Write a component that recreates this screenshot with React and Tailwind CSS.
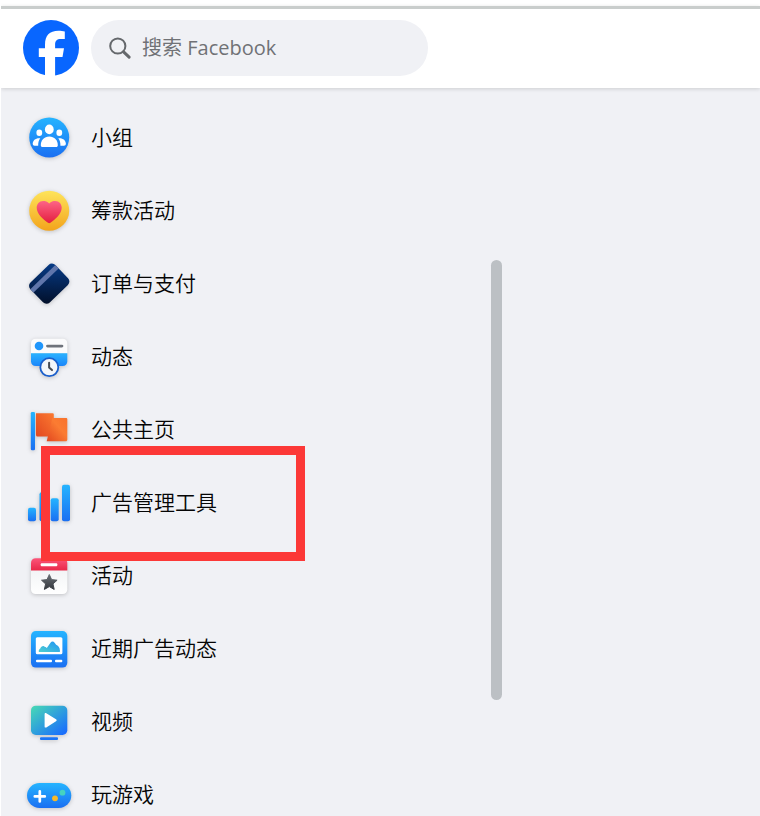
import React from "react";

function Icon({ children }) {
  return (
    <svg
      viewBox="0 0 45 45"
      className="h-[45px] w-[45px] shrink-0 overflow-visible drop-shadow-[0_1px_2px_rgba(0,0,0,0.2)]"
      aria-hidden="true"
    >
      {children}
    </svg>
  );
}

function Gradients() {
  return (
    <svg className="absolute h-0 w-0" aria-hidden="true">
      <defs>
        <linearGradient id="blue" x1="0" y1="0" x2="0" y2="1">
          <stop offset="0" stopColor="#25b4ff" />
          <stop offset="1" stopColor="#1a6ff2" />
        </linearGradient>
        <linearGradient id="sky" x1="0" y1="0" x2="0" y2="1">
          <stop offset="0" stopColor="#2bb3ff" />
          <stop offset="1" stopColor="#1a85fa" />
        </linearGradient>
        <linearGradient id="gold" x1="0" y1="0" x2="0" y2="1">
          <stop offset="0" stopColor="#fee45a" />
          <stop offset="1" stopColor="#f3a41c" />
        </linearGradient>
        <linearGradient id="heart" x1="0" y1="0" x2="0" y2="1">
          <stop offset="0" stopColor="#fd6486" />
          <stop offset="1" stopColor="#e41e3f" />
        </linearGradient>
        <linearGradient id="navy" gradientUnits="userSpaceOnUse" x1="14" y1="-14" x2="-14" y2="14">
          <stop offset="0" stopColor="#063a85" />
          <stop offset="1" stopColor="#02102b" />
        </linearGradient>
        <linearGradient id="orange" x1="1" y1="0" x2="0" y2="1">
          <stop offset="0" stopColor="#fb7a31" />
          <stop offset="1" stopColor="#e2471f" />
        </linearGradient>
        <linearGradient id="orangeFront" x1="0" y1="1" x2="1" y2="0">
          <stop offset="0" stopColor="#e2471f" />
          <stop offset="0.6" stopColor="#fb7c32" />
          <stop offset="1" stopColor="#f9722c" />
        </linearGradient>
        <linearGradient id="red" x1="0" y1="0" x2="0" y2="1">
          <stop offset="0" stopColor="#fb5579" />
          <stop offset="1" stopColor="#e92849" />
        </linearGradient>
        <linearGradient id="paper" x1="0" y1="0" x2="0" y2="1">
          <stop offset="0" stopColor="#f3f4f6" />
          <stop offset="1" stopColor="#ffffff" />
        </linearGradient>
        <linearGradient id="slate" x1="0" y1="0" x2="0" y2="1">
          <stop offset="0" stopColor="#6a6f75" />
          <stop offset="1" stopColor="#34383e" />
        </linearGradient>
        <linearGradient id="hills" x1="0" y1="1" x2="1" y2="0">
          <stop offset="0" stopColor="#4fd0d0" />
          <stop offset="1" stopColor="#1f93f5" />
        </linearGradient>
        <linearGradient id="video" x1="0" y1="0" x2="1" y2="1">
          <stop offset="0" stopColor="#48dbb4" />
          <stop offset="0.9" stopColor="#1b71fb" />
          <stop offset="1" stopColor="#1a63ff" />
        </linearGradient>
      </defs>
    </svg>
  );
}

function GroupsIcon() {
  return (
    <Icon>
      <circle cx="22.2" cy="22.5" r="20" fill="url(#blue)" />
      <g fill="#fff">
        <ellipse cx="22.3" cy="14.4" rx="4.4" ry="4.9" />
        <ellipse cx="12.3" cy="17.7" rx="2.9" ry="3.3" />
        <ellipse cx="32.3" cy="17.7" rx="2.9" ry="3.3" />
        <path d="M13.8 30.2c0-5 3.4-8.6 8.5-8.6s8.5 3.6 8.5 8.6c0 1.2-.6 1.8-1.8 1.8H15.6c-1.2 0-1.8-.6-1.8-1.8Z" />
        <path d="M13.3 23.3c-1.5 1.9-2.2 4.5-2.1 7.4H7.6c-1.1 0-1.9-.7-1.9-1.9 0-3.4 3-6 7.6-5.5Z" />
        <path d="M31.3 23.3c1.5 1.9 2.2 4.5 2.1 7.4H37c1.1 0 1.9-.7 1.9-1.9 0-3.4-3-6-7.6-5.5Z" />
      </g>
    </Icon>
  );
}

function FundraiserIcon() {
  return (
    <Icon>
      <circle cx="22.2" cy="22.7" r="20" fill="url(#gold)" />
      <path
        d="M22.2 15.4C24 13.5 26.2 13 28.2 13c4 0 6.5 3 6.5 6.8 0 6.3-6.8 11.9-11.3 15-.8.5-1.6.5-2.4 0-4.5-3.1-11.3-8.7-11.3-15C9.7 16 12.2 13 16.2 13c2 0 4.2.5 6 2.4Z"
        fill="url(#heart)"
      />
    </Icon>
  );
}

function PaymentsIcon() {
  return (
    <Icon>
      <g transform="translate(22.2 22.7) rotate(-44)">
        <rect x="-17.4" y="-13.9" width="34.8" height="27.8" rx="4.8" fill="url(#navy)" />
        <rect x="-17.4" y="-9.2" width="34.8" height="4.7" fill="#6076ab" />
      </g>
    </Icon>
  );
}

function FeedIcon() {
  return (
    <Icon>
      <path d="M4 19.5v-10c0-3 1.9-4.8 4.8-4.8h26.7c2.9 0 4.8 1.8 4.8 4.8v10Z" fill="#fbfbfc" />
      <path d="M4 19.3h36.3v8c0 3-1.9 4.8-4.8 4.8H8.8c-2.9 0-4.8-1.8-4.8-4.8Z" fill="url(#sky)" />
      <circle cx="12" cy="12" r="4.3" fill="#2096fb" />
      <path d="M20.5 12.1h14.4" stroke="#6f737b" strokeWidth="2.9" strokeLinecap="round" />
      <circle cx="22.3" cy="33.2" r="9" fill="#f4f6fa" stroke="#1b5fcb" strokeWidth="1.8" />
      <path d="M22.1 28.8v4.6l2.9 2.7" fill="none" stroke="#474b54" strokeWidth="2" strokeLinecap="round" strokeLinejoin="round" />
    </Icon>
  );
}

function PagesIcon() {
  return (
    <Icon>
      <rect x="3.8" y="5" width="4.2" height="38.3" rx="1.3" fill="url(#blue)" />
      <path d="M9 6.300h16.500c.8 0 1.300.5 1.300 1.300v21.900H10.500c-.9 0-1.500-.6-1.500-1.500Z" fill="url(#orange)" />
      <path d="M25.300 11h13.700c.8 0 1.300.5 1.300 1.300v20.500c0 .9-.6 1.500-1.500 1.500H19.700Z" fill="url(#orangeFront)" />
    </Icon>
  );
}

function AdsManagerIcon() {
  return (
    <Icon>
      <g fill="url(#blue)">
        <rect x="1" y="27.7" width="8" height="13.6" rx="2" />
        <rect x="12.5" y="12.3" width="8" height="29" rx="2" />
        <rect x="23.7" y="18.3" width="8" height="23" rx="2" />
        <rect x="35" y="4.7" width="8" height="36.6" rx="2" />
      </g>
    </Icon>
  );
}

function EventsIcon() {
  return (
    <Icon>
      <path d="M4 17h36.300v19.200c0 3-1.900 4.800-4.800 4.800H8.800C5.900 41 4 39.200 4 36.200Z" fill="url(#paper)" />
      <path d="M4 17.400v-7.300c0-3 1.900-4.800 4.800-4.800h26.700c2.900 0 4.800 1.800 4.800 4.800v7.300Z" fill="url(#red)" />
      <rect x="13.7" y="10.3" width="16.6" height="3" rx="1" fill="#fff" />
      <path
        d="m22.3 21.5 2.3 5.1 5.5.6-4.1 3.7 1.2 5.5-4.9-2.8-4.9 2.8 1.2-5.5-4.1-3.7 5.5-.6Z"
        fill="url(#slate)"
        stroke="url(#slate)"
        strokeLinejoin="round"
      />
    </Icon>
  );
}

function RecentAdsIcon() {
  return (
    <Icon>
      <rect x="4" y="5" width="36.3" height="36.6" rx="4.8" fill="url(#blue)" />
      <rect x="8.8" y="11.2" width="26.6" height="17" rx="1.5" fill="#fff" />
      <path
        d="M11.7 25.2c0-1.300.6-2 1.600-2.800.6-2 3.300-3.500 4.600-1.500.8 0 1.500.5 1.900 1.200l3.700-5.400c1.100-1.500 3-1.500 4.100 0l1.500 2c1.800.5 3.900 2.500 3.900 6.200 0 .8-.4 1.200-1.200 1.200h-19c-.7 0-1.100-.3-1.100-.9Z"
        fill="url(#hills)"
      />
      <rect x="9" y="33.8" width="16" height="2.5" rx="1" fill="#fff" />
      <rect x="28" y="33.8" width="7.3" height="2.5" rx="1" fill="#fff" />
    </Icon>
  );
}

function VideoIcon() {
  return (
    <Icon>
      <rect x="4" y="6.7" width="36.3" height="29.3" rx="4.8" fill="url(#video)" />
      <path d="M17.6 15.2c0-1.100.8-1.500 1.700-1l9.700 6.100c.9.500.9 1.500 0 2l-9.700 6.100c-.9.500-1.700.1-1.700-1Z" fill="#fff" />
      <rect x="13" y="38.2" width="18" height="2.9" rx="1" fill="#1b74f6" />
    </Icon>
  );
}

function GamesIcon() {
  return (
    <Icon>
      <rect x="0" y="11" width="44.3" height="25" rx="12.5" fill="url(#blue)" />
      <path d="M12.8 19.4v10M7.8 24.4h10" stroke="#fff" strokeWidth="2.7" strokeLinecap="round" />
      <circle cx="28" cy="26.3" r="2.9" fill="#f7b928" />
      <circle cx="35.5" cy="20.7" r="2.9" fill="#45d3c0" />
    </Icon>
  );
}

const menu = [
  { label: "小组", Glyph: GroupsIcon },
  { label: "筹款活动", Glyph: FundraiserIcon },
  { label: "订单与支付", Glyph: PaymentsIcon },
  { label: "动态", Glyph: FeedIcon },
  { label: "公共主页", Glyph: PagesIcon },
  { label: "广告管理工具", Glyph: AdsManagerIcon },
  { label: "活动", Glyph: EventsIcon },
  { label: "近期广告动态", Glyph: RecentAdsIcon },
  { label: "视频", Glyph: VideoIcon },
  { label: "玩游戏", Glyph: GamesIcon },
];

function Header() {
  return (
    <header className="relative flex shrink-0 items-center gap-3 border-t-[3px] border-[#c9cdcc] bg-white pt-[11px] pr-4 pb-3 pl-[22px] shadow-[0_1px_4px_rgba(0,0,0,0.15)]">
      <a href="#home" aria-label="Facebook" className="shrink-0">
        <svg viewBox="0 0 56 56" className="h-14 w-14">
          <circle cx="28" cy="28" r="28" fill="#0866ff" />
          <path
            d="M22 56V37h-6.200V28.200H22v-3.300c0-9.200 4.400-14.100 13.500-14.100 2.200 0 4.700.3 6.300.8v7.500c-1-.1-2.400-.2-3.900-.2-4.200 0-5.800 1.900-5.800 5.900v3.400h8.900L39.500 37h-7.400v19Z"
            fill="#fff"
          />
        </svg>
      </a>
      <label className="flex h-14 w-[337px] items-center gap-[11px] rounded-full bg-[#f0f1f5] pr-4 pl-[18px]">
        <svg viewBox="0 0 22 22" className="h-[22px] w-[22px] shrink-0" fill="none" stroke="#65686c" aria-hidden="true">
          <circle cx="8.8" cy="9" r="7.6" strokeWidth="2" />
          <path d="m14.6 14.9 5.5 5.2" strokeWidth="3" strokeLinecap="round" />
        </svg>
        <input
          type="search"
          aria-label="搜索 Facebook"
          placeholder="搜索 Facebook"
          className="min-w-0 flex-1 bg-transparent font-['Open_Sans','Noto_Sans_CJK_SC',sans-serif] text-[20px] leading-7 outline-none placeholder:text-[#707276]"
        />
      </label>
    </header>
  );
}

export default function App() {
  return (
    <div className="relative flex h-screen flex-col overflow-hidden border-l border-white bg-[#f0f1f5] font-['Noto_Sans_CJK_SC',sans-serif] text-[#050505]">
      <Gradients />
      <div className="h-[6px] shrink-0 bg-white" />
      <Header />
      <div className="flex min-h-0 w-full max-w-[501px] flex-1 items-start justify-between">
        <nav className="min-w-0 flex-1 pt-[13px]">
          <ul>
            {menu.map(({ label, Glyph }) => (
              <li key={label}>
                <a href="#menu" className="flex h-[73px] items-center gap-[19px] pl-[26px] text-[21px] leading-7 font-[350]">
                  <Glyph />
                  <span className="pb-[3px]">{label}</span>
                </a>
              </li>
            ))}
          </ul>
        </nav>
        <div className="mt-[172px] h-[440px] w-[11px] shrink-0 rounded-full bg-[#bcc0c4]" />
      </div>
      <div className="pointer-events-none absolute top-[446px] left-[40px] h-[115px] w-[264px] border-[9px] border-[#fc3837]" />
    </div>
  );
}
